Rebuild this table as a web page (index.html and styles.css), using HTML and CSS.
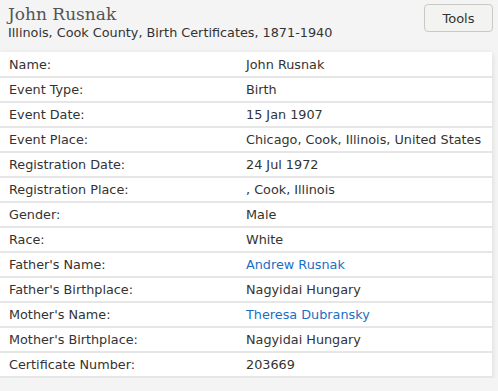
FILE: index.html
```html
<!DOCTYPE html>
<html lang="en">
<head>
  <meta charset="UTF-8" />
  <title>John Rusnak</title>
  <link rel="stylesheet" href="styles.css">
</head>
<body>
  <header class="record-head">
    <div class="titles">
      <h1 class="person">John Rusnak</h1>
      <div class="collection">Illinois, Cook County, Birth Certificates, 1871-1940</div>
    </div>
    <button class="tools-btn">Tools</button>
  </header>

  <table class="record">
    <tr><td class="label">Name:</td><td>John Rusnak</td></tr>
    <tr><td class="label">Event Type:</td><td>Birth</td></tr>
    <tr><td class="label">Event Date:</td><td>15 Jan 1907</td></tr>
    <tr><td class="label">Event Place:</td><td>Chicago, Cook, Illinois, United States</td></tr>
    <tr><td class="label">Registration Date:</td><td>24 Jul 1972</td></tr>
    <tr><td class="label">Registration Place:</td><td>, Cook, Illinois</td></tr>
    <tr><td class="label">Gender:</td><td>Male</td></tr>
    <tr><td class="label">Race:</td><td>White</td></tr>
    <tr><td class="label">Father's Name:</td><td><a href="#">Andrew Rusnak</a></td></tr>
    <tr><td class="label">Father's Birthplace:</td><td>Nagyidai Hungary</td></tr>
    <tr><td class="label">Mother's Name:</td><td><a href="#">Theresa Dubransky</a></td></tr>
    <tr><td class="label">Mother's Birthplace:</td><td>Nagyidai Hungary</td></tr>
    <tr><td class="label">Certificate Number:</td><td>203669</td></tr>
  </table>
</body>
</html>
```

FILE: styles.css
```css
body {
  margin: 0;
  background: #f4f4f4;
  font-family: 'DejaVu Sans', Verdana, sans-serif;
  font-size: 12.8px;
  color: #333;
}

.record-head {
  display: flex;
  justify-content: space-between;
  align-items: flex-start;
  padding: 4px 5px 0 8px;
  height: 48px;
  box-sizing: border-box;
}

.person {
  margin: 0;
  font-family: 'DejaVu Serif', serif;
  font-weight: normal;
  font-size: 17px;
  line-height: 20px;
  color: #555;
}

.collection {
  margin-top: 1px;
  font-size: 12.8px;
  color: #333;
}

.tools-btn {
  font-family: inherit;
  font-size: 13px;
  color: #333;
  background: #f3f3f1;
  border: 1px solid #c9c9c6;
  border-radius: 4px;
  padding: 0;
  width: 69px;
  height: 28px;
}

.record {
  width: 492px;
  margin-top: 4px;
  background: #fff;
  border-collapse: collapse;
  box-shadow: 0 2px 6px rgba(0,0,0,0.12);
}

.record td {
  height: 25px;
  padding: 0 0 0 9px;
  border-bottom: 2px solid #e6e6e6;
  box-sizing: border-box;
}

.record td.label {
  width: 237px;
}

.record a {
  color: #1a6fc4;
  text-decoration: none;
}
```
